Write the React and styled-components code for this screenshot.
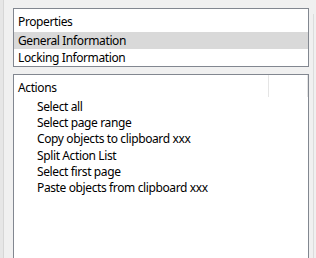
import React from 'react'
import styled, { createGlobalStyle } from 'styled-components'

const GlobalStyle = createGlobalStyle`
  html, body {
    margin: 0;
    padding: 0;
    background: #f0f0f0;
    overflow: hidden;
  }
  body {
    font-family: "Noto Sans", "Liberation Sans", sans-serif;
    font-size: 12px;
    letter-spacing: -0.38px;
    color: #000;
  }
`

const Page = styled.div`
  display: flex;
  width: 316px;
  height: 258px;
  overflow: hidden;
`

const LeftEdge = styled.div`
  width: 3px;
  background: #e6e6e6;
  border-right: 1px solid #d6d6d6;
`

const Content = styled.div`
  display: flex;
  flex-direction: column;
  gap: 7px;
  width: 296px;
  padding: 8px 0 0 9px;
`

const RightEdge = styled.div`
  padding-top: 14px;
  display: flex;
  justify-content: flex-end;
  flex: 1;
`

const Splitter = styled.div`
  width: 1px;
  margin-right: 2px;
  background: #dcdcdc;
`

const Box = styled.div`
  background: #fff;
  border: 1px solid #828790;
  border-bottom: ${p => (p.$open ? 'none' : '1px solid #828790')};
  height: ${p => p.$height}px;
  box-sizing: border-box;
  display: flex;
  flex-direction: column;
`

const GroupTitle = styled.div`
  height: 23px;
  box-sizing: border-box;
  padding: 3px 0 0 4px;
  line-height: 20px;
  white-space: nowrap;
`

const Row = styled.div`
  height: 17px;
  line-height: 17px;
  padding-left: 4px;
  white-space: nowrap;
  background: ${p => (p.$selected ? '#d9d9d9' : 'transparent')};
`

const Header = styled.div`
  display: flex;
  height: 22px;
`

const HeaderCell = styled.div`
  width: ${p => p.$width}px;
  box-sizing: border-box;
  border-right: 1px solid #e5e5e5;
  padding: 4px 0 0 4px;
  line-height: 17px;
  white-space: nowrap;
`

const HeaderRest = styled.div`
  flex: 1;
  border-right: 1px solid #e5e5e5;
`

const ItemList = styled.div`
  padding-top: 2px;
`

const Item = styled.div`
  height: 16.2px;
  line-height: 16px;
  padding-left: 23px;
  white-space: nowrap;
`

const actions = [
  'Select all',
  'Select page range',
  'Copy objects to clipboard xxx',
  'Split Action List',
  'Select first page',
  'Paste objects from clipboard xxx',
]

export default function App() {
  return (
    <>
      <GlobalStyle />
      <Page>
        <LeftEdge />
        <Content>
          <Box $height={59}>
            <GroupTitle>Properties</GroupTitle>
            <Row $selected>General Information</Row>
            <Row>Locking Information</Row>
          </Box>
          <Box $height={200} $open>
            <Header>
              <HeaderCell $width={255}>Actions</HeaderCell>
              <HeaderRest />
            </Header>
            <ItemList>
              {actions.map(a => (
                <Item key={a}>{a}</Item>
              ))}
            </ItemList>
          </Box>
        </Content>
        <RightEdge>
          <Splitter />
        </RightEdge>
      </Page>
    </>
  )
}
